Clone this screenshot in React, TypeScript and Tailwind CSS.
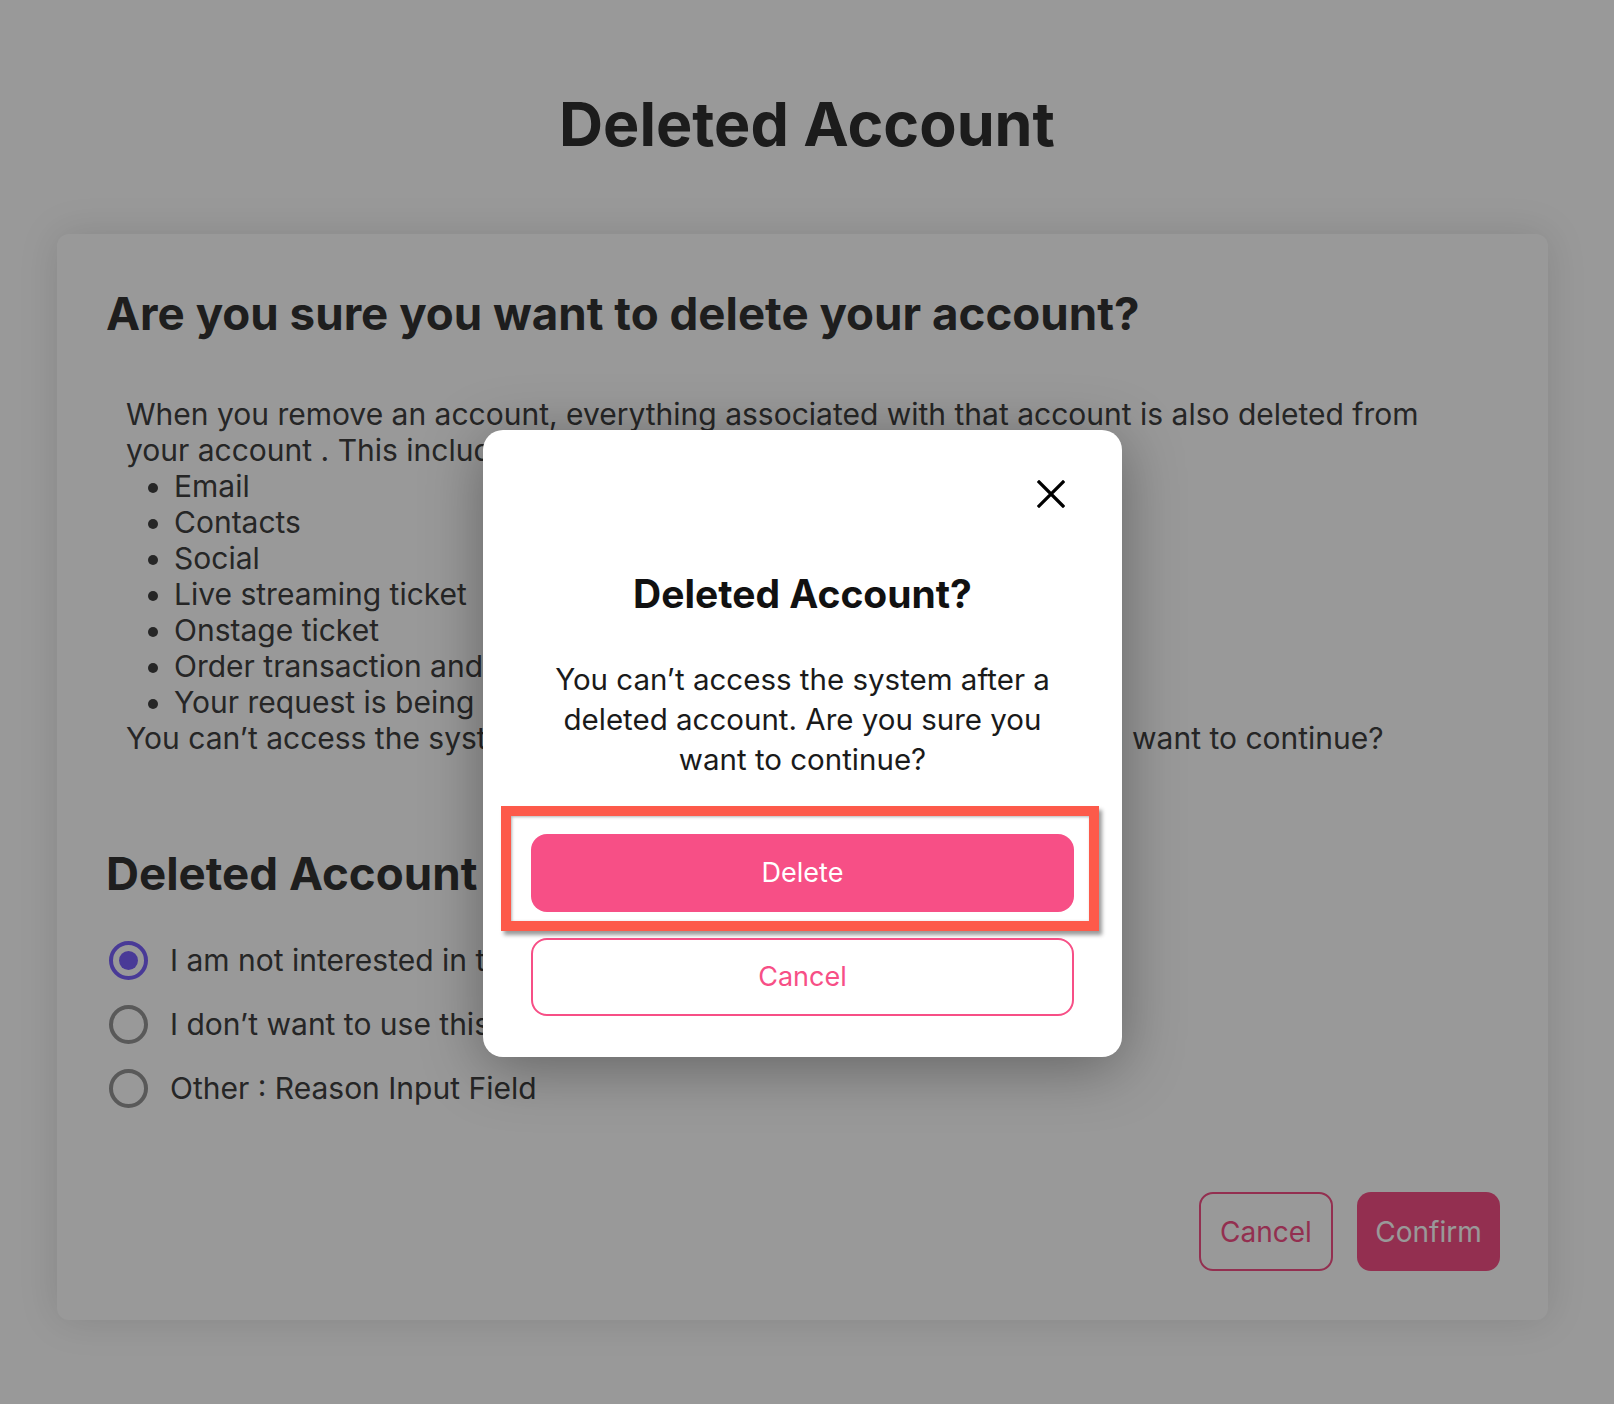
import React, { useState } from 'react';

const reasons = [
  'I am not interested in this app anymore',
  'I don’t want to use this account anymore',
  'Other : Reason Input Field',
];

const items = [
  'Email',
  'Contacts',
  'Social',
  'Live streaming ticket',
  'Onstage ticket',
  'Order transaction and history',
  'Your request is being processed',
];

const Radio = ({ checked }: { checked: boolean }) => (
  <span
    className={`flex h-[39px] w-[39px] shrink-0 items-center justify-center rounded-full border-4 ${
      checked ? 'border-[#7b62fc]' : 'border-[#949494]'
    }`}
  >
    {checked && <span className="h-[19px] w-[19px] rounded-full bg-[#7b62fc]" />}
  </span>
);

export default function App() {
  const [selected, setSelected] = useState(0);

  return (
    <div className="relative h-[1404px] overflow-hidden bg-white font-['Inter',sans-serif] text-[#333]">
      <h1 className="pt-[87px] text-center text-[61px] font-bold leading-[74px] text-[#2f2f2f]">
        Deleted Account
      </h1>

      {/* page card behind the modal */}
      <div className="ml-[57px] mr-[66px] mt-[73px] rounded-xl bg-white px-[49px] pb-[49px] pr-[48px] pt-[52px] shadow-[0_0_40px_rgba(0,0,0,0.12)]">
        <h2 className="text-[45.7px] font-bold leading-[55px] text-[#333]">
          Are you sure you want to delete your account?
        </h2>

        <div className="mt-[55px] pl-[20px] text-[30px] leading-[36px] text-[#404040]">
          <p>When you remove an account, everything associated with that account is also deleted from</p>
          <p>your account . This includes:</p>
          <ul className="list-disc pl-[48px]">
            {items.map((item) => (
              <li key={item}>{item}</li>
            ))}
          </ul>
          <p>You can’t access the system after a deleted account. Are you sure you want to continue?</p>
        </div>

        <h2 className="mt-[90px] text-[45.7px] font-bold leading-[55px] text-[#333]">Deleted Account</h2>

        <div className="mt-[27px] flex flex-col">
          {reasons.map((reason, i) => (
            <button
              key={reason}
              onClick={() => setSelected(i)}
              className="ml-[3px] flex h-[64px] items-center gap-[22px] text-left text-[30px] text-[#404040]"
            >
              <Radio checked={selected === i} />
              {reason}
            </button>
          ))}
        </div>

        <div className="mt-[72px] flex justify-end gap-[24px]">
          <button className="h-[79px] w-[134px] rounded-[14px] border-2 border-[#f64f85] text-[28px] text-[#f64f85]">
            Cancel
          </button>
          <button className="h-[79px] w-[143px] rounded-[14px] bg-[#f64f85] text-[28px] text-white">
            Confirm
          </button>
        </div>
      </div>

      {/* dim overlay */}
      <div className="absolute inset-0 bg-black/40" />

      {/* confirm modal */}
      <div className="absolute left-[483px] top-[430px] h-[627px] w-[639px] rounded-[20px] bg-white shadow-[0_10px_60px_rgba(0,0,0,0.35)]">
        <button className="absolute right-[57px] top-[50px] h-[28px] w-[28px]" aria-label="Close">
          <svg viewBox="0 0 28 28" className="h-full w-full" fill="none" stroke="#000" strokeWidth="3.2" strokeLinecap="square">
            <path d="M2 2L26 26M26 2L2 26" />
          </svg>
        </button>

        <h3 className="pt-[141px] text-center text-[39px] font-bold leading-[46px] text-[#111]">
          Deleted Account?
        </h3>
        <p className="mt-[42px] text-center text-[29.5px] leading-[40px] text-[#1a1a1a]">
          You can’t access the system after a
          <br />
          deleted account. Are you sure you
          <br />
          want to continue?
        </p>

        <div className="mt-[55px] flex flex-col gap-[26px] px-[48px]">
          <button className="h-[78px] rounded-[16px] bg-[#f74f86] text-[27px] text-white">Delete</button>
          <button className="h-[78px] rounded-[16px] border-2 border-[#f74f86] text-[27px] text-[#f74f86]">
            Cancel
          </button>
        </div>

        {/* highlight annotation */}
        <div className="pointer-events-none absolute left-[18px] top-[376px] h-[125px] w-[598px] border-[10px] border-[#fd5a4a] shadow-[inset_1px_1px_3px_rgba(0,0,0,0.3),3px_4px_4px_rgba(0,0,0,0.4)]" />
      </div>
    </div>
  );
}
